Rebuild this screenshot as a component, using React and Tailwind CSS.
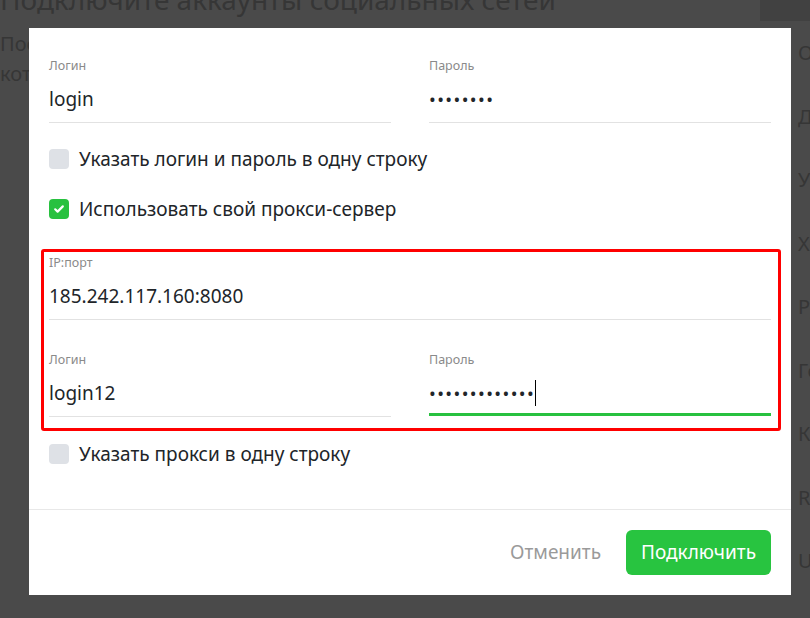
import React from 'react'

const sideItems = ['Обзор', 'Друзья', 'Управление', 'Хештеги', 'Рубрики', 'Геолокация', 'Контакты', 'RSS', 'UTM']

function Field({ label, children, line = 'border-b border-[#e2e2e2] pb-[10px]' }) {
  return (
    <div>
      <div className="text-[12.5px] leading-4 text-[#8a8a8a]">{label}</div>
      <div className={`mt-[6px] pt-[6px] text-[19px] leading-[26px] text-[#212529] ${line}`}>
        {children}
      </div>
    </div>
  )
}

function Check({ checked, children }) {
  return (
    <div className="flex h-5 items-center gap-[10px]">
      {checked ? (
        <span className="flex h-5 w-5 items-center justify-center rounded-[4px] bg-[#28c13f]">
          <svg width="14" height="14" viewBox="0 0 14 14" fill="none">
            <path d="M3.2 7.3l2.4 2.3 5.2-5.2" stroke="white" strokeWidth="2.2" strokeLinecap="round" strokeLinejoin="round" />
          </svg>
        </span>
      ) : (
        <span className="h-5 w-5 rounded-[4px] bg-[#dee1e6]"></span>
      )}
      <span className="text-[19px] leading-6 text-[#212529]">{children}</span>
    </div>
  )
}

function Dots({ count }) {
  return <span className="text-[18px] tracking-[1.4px]">{'•'.repeat(count)}</span>
}

export default function App() {
  return (
    <div className="relative h-[618px] w-full overflow-hidden bg-[#4a4a4a] font-['Noto_Sans',sans-serif]">
      {/* page behind the dialog */}
      <div className="flex h-full">
        <main className="flex-1 overflow-hidden text-[#363636]">
          <h1 className="-mt-[18px] whitespace-nowrap text-[28px] leading-[34px]">Подключите аккаунты социальных сетей</h1>
          <div className="mt-[13px] text-[20px] leading-[30px]">
            <p className="whitespace-nowrap">Поставьте галочки напротив аккаунтов,</p>
            <p className="whitespace-nowrap">которые хотите подключить</p>
          </div>
        </main>
        <aside className="w-[50px] shrink-0 overflow-hidden text-[#363636]">
          <div className="h-[21px] bg-[#414141]"></div>
          {sideItems.map((s) => (
            <div key={s} className="h-[63.5px] whitespace-nowrap pl-[38px] text-[20px] leading-[63.5px]">{s}</div>
          ))}
        </aside>
      </div>

      {/* dialog */}
      <div className="absolute left-[29px] top-[28px] flex h-[567px] w-[762px] flex-col bg-white">
        <div className="px-5 pt-[30px]">
          <div className="grid grid-cols-2 gap-x-[38px]">
            <Field label="Логин">login</Field>
            <Field label="Пароль"><Dots count={8} /></Field>
          </div>

          <div className="mt-[26px]">
            <Check>Указать логин и пароль в одну строку</Check>
          </div>
          <div className="mt-[30px]">
            <Check checked>Использовать свой прокси-сервер</Check>
          </div>

          <div className="-ml-2 -mr-[10px] mt-[30px] rounded-[3px] border-[3px] border-[#ff0000] pb-[11px] pl-[5px] pr-[7px] pt-[3px]">
            <Field label="IP:порт">185.242.117.160:8080</Field>
            <div className="mt-[32px] grid grid-cols-2 gap-x-[38px]">
              <Field label="Логин">login12</Field>
              <Field label="Пароль" line="border-b-[3px] border-[#28c13f] pb-[7px]">
                <span className="inline-flex items-center">
                  <Dots count={13} />
                  <span className="inline-block h-[26px] w-px bg-black"></span>
                </span>
              </Field>
            </div>
          </div>

          <div className="mt-[13px]">
            <Check>Указать прокси в одну строку</Check>
          </div>
        </div>

        <div className="mt-auto flex items-center justify-end border-t border-[#e8e8e8] px-5 pb-5 pt-5">
          <button className="mr-[25px] text-[19px] text-[#9a9a9a]">Отменить</button>
          <button className="h-[45px] rounded-[6px] bg-[#28c440] px-[15px] text-[19px] text-white">Подключить</button>
        </div>
      </div>
    </div>
  )
}
